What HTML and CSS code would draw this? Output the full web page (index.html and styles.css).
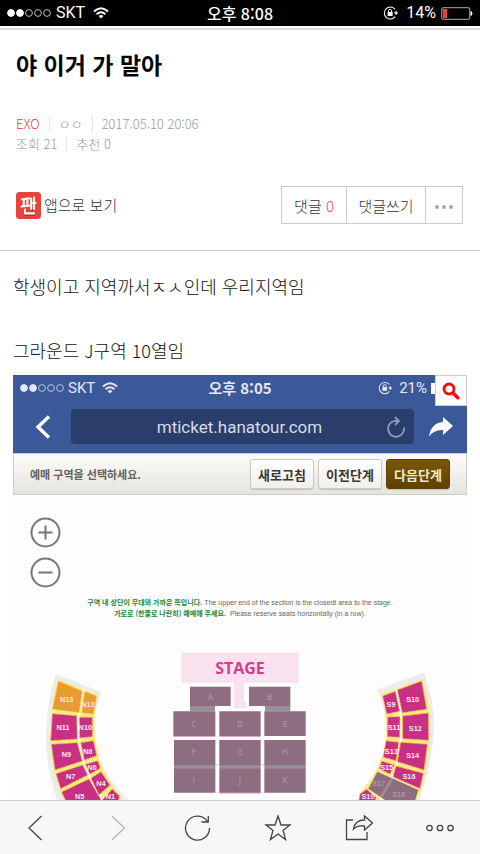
FILE: index.html
```html
<!DOCTYPE html>
<html lang="ko">
<head>
<meta charset="utf-8">
<meta name="viewport" content="width=device-width, initial-scale=1">
<title>야 이거 가 말아</title>
<link rel="stylesheet" href="styles.css">
</head>
<body>
<svg width="0" height="0" class="defs" aria-hidden="true">
  <symbol id="signal" viewBox="0 0 44 10">
    <g stroke="currentColor" stroke-width="1">
      <circle cx="4" cy="5" r="3.4" fill="currentColor"/><circle cx="13" cy="5" r="3.4" fill="currentColor"/>
      <g fill="none" opacity=".75"><circle cx="22" cy="5" r="3.4"/><circle cx="31" cy="5" r="3.4"/><circle cx="40" cy="5" r="3.4"/></g>
    </g>
  </symbol>
  <symbol id="wifi" viewBox="0 0 16 12">
    <g fill="none" stroke="currentColor" stroke-width="2"><path d="M1 4.4Q8-2 15 4.4"/><path d="M3.6 7.2Q8 3.2 12.4 7.2"/></g>
    <path d="M5.6 9Q8 7 10.4 9L8 11.6z" fill="currentColor"/>
  </symbol>
  <symbol id="lock" viewBox="0 0 16 14">
    <path d="M12 3.2A6 6 0 1 0 12.2 10.6M13 4.8V7.6" fill="none" stroke="currentColor" stroke-width="1.1"/>
    <path d="M10.8 6.4H15.4L13.1 9z" fill="currentColor"/>
    <rect x="4.6" y="6" width="5" height="4" fill="currentColor"/>
    <path d="M5.6 6V4.8a1.5 1.5 0 0 1 3 0V6" fill="none" stroke="currentColor"/>
  </symbol>
</svg>

<header class="status">
  <div class="status-side"><svg class="signal"><use href="#signal"/></svg><span>SKT</span><svg class="wifi"><use href="#wifi"/></svg></div>
  <span class="clock">오후 8:08</span>
  <div class="status-side status-end">
    <svg class="lock"><use href="#lock"/></svg><span>14%</span>
    <svg class="battery" viewBox="0 0 32 13"><rect x=".7" y=".7" width="28" height="11.6" rx="2" fill="none" stroke="#8b8b8b" stroke-width="1.3"/><rect x="2" y="2" width="4" height="9" fill="#ff3b30"/><path d="M30 4.5Q32 6.5 30 8.5z" fill="#fff" stroke="#fff"/></svg>
  </div>
</header>

<main class="page">
  <section class="head">
    <h1>야 이거 가 말아</h1>
    <ul class="meta">
      <li class="topic">EXO</li><li>ㅇㅇ</li><li>2017.05.10 20:06</li>
    </ul>
    <ul class="meta">
      <li>조회 21</li><li>추천 0</li>
    </ul>
    <div class="tools">
      <a class="app" href="#">
        <svg class="app-icon" viewBox="0 0 25 27" aria-hidden="true">
          <rect width="25" height="27" rx="3.5" fill="#e8433a"/>
          <g fill="none" stroke="#b62b25" stroke-width="2.4" transform="translate(1 1)"><path d="M15.6 5V18M8.5 17V21.5H18"/></g>
          <g fill="none" stroke="#fff" stroke-width="2.1" stroke-linecap="round" stroke-linejoin="round"><path d="M6 7.2L13 6.4M7.8 8V13.5M11.4 8V13M5.6 14.5L13 13.6M15.2 6.5V17M18 5.5V17M15.5 11H19.5M9 17.5V21.4H18"/></g>
        </svg>
        <span>앱으로 보기</span>
      </a>
      <div class="group">
        <button type="button" class="b-count">댓글 <em>0</em></button>
        <button type="button" class="b-write">댓글쓰기</button>
        <button type="button" class="b-more" aria-label="더보기"><svg viewBox="0 0 20 6"><g fill="#aaa"><circle cx="3" cy="3" r="2"/><circle cx="10" cy="3" r="2"/><circle cx="17" cy="3" r="2"/></g></svg></button>
      </div>
    </div>
  </section>

  <article class="body">
    <p>학생이고 지역까서ㅈㅅ인데 우리지역임</p>
    <p>그라운드 J구역 10열임</p>

    <section class="shot">
      <button type="button" class="enlarge" aria-label="확대"><svg viewBox="0 0 18 18"><circle cx="7" cy="7" r="5" fill="none" stroke="#f20d0d" stroke-width="2.8"/><path d="M11 11L15.8 15.8" stroke="#f20d0d" stroke-width="3.4" stroke-linecap="round"/></svg></button>
      <div class="blue">
        <div class="status inner">
          <div class="status-side"><svg class="signal"><use href="#signal"/></svg><span>SKT</span><svg class="wifi"><use href="#wifi"/></svg></div>
          <span class="clock">오후 8:05</span>
          <div class="status-side status-end"><svg class="lock"><use href="#lock"/></svg><span>21%</span><i class="charge"></i></div>
        </div>
        <div class="address">
          <button type="button" class="back" aria-label="뒤로"><svg viewBox="0 0 16 24"><path d="M14 1.5L3 12L14 22.5" fill="none" stroke="#fff" stroke-width="3.4"/></svg></button>
          <div class="url"><span>mticket.hanatour.com</span><svg viewBox="0 0 20 22" aria-hidden="true"><path d="M18 11.5A8 8 0 1 1 8 5H13M9 1L13 5L9 9" fill="none" stroke="#8d9cc4" stroke-width="1.8"/></svg></div>
          <button type="button" class="share" aria-label="공유"><svg viewBox="0 0 24 20"><path d="M14 0L24 9L14 18V13Q5 12.5 0 19.5Q2 6 14 5z" fill="#fff"/></svg></button>
        </div>
      </div>
      <div class="steps">
        <strong>예매 구역을 선택하세요.</strong>
        <button type="button">새로고침</button>
        <button type="button">이전단계</button>
        <button type="button" class="next">다음단계</button>
      </div>
      <div class="map">
        <div class="zoom">
          <button type="button" aria-label="확대"><svg viewBox="0 0 31 31"><g fill="none" stroke="#777" stroke-width="2"><circle cx="15.5" cy="15.5" r="14"/><path d="M8.5 15.5H22.5M15.5 8.5V22.5"/></g></svg></button>
          <button type="button" aria-label="축소"><svg viewBox="0 0 31 31"><g fill="none" stroke="#777" stroke-width="2"><circle cx="15.5" cy="15.5" r="14"/><path d="M8.5 15.5H22.5"/></g></svg></button>
        </div>
        <p class="notice"><b>구역 내 상단이 무대와 가까운 쪽입니다.</b> The upper end of the section is the closedt area to the stage.</p>
        <p class="notice"><b>가로로 (한줄로 나란히) 예매해 주세요.</b>&nbsp; Please reserve seats horizontally (in a row).</p>
        <svg class="seats" viewBox="-51 150 1362 540" role="img" aria-label="좌석 배치도">
          <g fill="#fae1ef"><path d="M454 188H806V278H642V335H650V355H612V278H454z"/></g>
          <text x="630" y="251" class="stage">STAGE</text>
          <g fill="#999093"><path d="M480 348H555V364H480zM705 348H781V364H705zM432 524H827V540H432z"/></g>
          <g fill="#8e6d80">
            <path d="M480 290H602V348H480zM657 290H781V348H657z"/>
            <path d="M430 364H556V438H430zM568 364H692V438H568zM703 364H827V438H703z"/>
            <path d="M432 450H556V526H432zM568 450H692V526H568zM703 450H827V526H703z"/>
            <path d="M432 536H556V608H432zM568 536H692V608H568zM703 536H827V608H703z"/>
          </g>
          <path d="M430 439H556M568 439H692M568 609H692" stroke="#cf5b91" stroke-width="2"/>
          <path d="M556 526H568V540H556zM692 526H703V540H692z" fill="#fff"/>
          <g class="floor">
            <text x="541" y="329">A</text><text x="719" y="329">B</text>
            <text x="491" y="410">C</text><text x="630" y="410">D</text><text x="765" y="410">E</text>
            <text x="491" y="495">F</text><text x="630" y="495">G</text><text x="765" y="495">H</text>
            <text x="491" y="580">I</text><text x="630" y="580">J</text><text x="765" y="580">K</text>
          </g>
          <text x="632" y="648" class="ground">GROUND</text>

          <path d="M77 252L213 305Q180 400 200 480Q225 575 320 650L350 690H105Q50 570 48 440Q50 340 77 252z" fill="#ececec"/>
          <path d="M83 268L204 315Q182 400 204 490Q218 560 275 620L240 690H130Q60 560 61 440Q64 340 83 268z" fill="#fbe983"/>
          <path d="M160 300Q130 410 160 510Q180 580 226 640" fill="none" stroke="#fff7f4" stroke-width="6"/>
          <g class="seat">
            <path class="gold" d="M85 273L157 303L148 368L67 358z"/><path class="gold" d="M164 304L201 318L190 373L155 368z"/>
            <path d="M67 371L140 377L142 447L62 452z"/><path d="M148 382H187V440L149 444z"/>
            <path d="M64 463L142 458L157 513L75 540z"/><path d="M152 458L190 452L200 497L163 510z"/>
            <path d="M78 551L158 525L173 555L92 596z"/><path d="M166 523L203 512L211 535L180 552z"/>
            <path d="M95 606L177 567L212 628V690H135z"/><path d="M183 565L213 545L240 585L207 615z"/>
            <path d="M217 630L247 597L268 618L260 680z"/>
          </g>
          <g class="label">
            <text x="110" y="337">N13</text><text x="174" y="350">N12</text><text x="99" y="421">N11</text><text x="166" y="421">N10</text>
            <text x="109" y="501">N9</text><text x="173" y="492">N8</text><text x="122" y="566">N7</text><text x="186" y="539">N6</text>
            <text x="149" y="626">N5</text><text x="213" y="587">N4</text><text x="241" y="628">N1</text>
          </g>

          <g transform="translate(630 0)">
            <path d="M412 298L552 248Q590 350 580 440Q570 570 510 690H290L345 635Q430 560 442 440Q440 370 412 298z" fill="#ececec"/>
            <path d="M424 313L548 267Q577 360 569 440Q565 560 510 690H340L360 608Q430 530 439 440Q440 370 424 313z" fill="#fbe983"/>
            <path d="M468 300Q494 400 478 480Q470 560 420 630" fill="none" stroke="#fff7f4" stroke-width="6"/>
            <g class="seat">
              <path d="M428 318L466 304L479 364L440 372z"/><path d="M472 300L545 273L560 358L487 368z"/>
              <path d="M443 381L480 380L479 442L442 440z"/><path d="M488 378L565 369L566 451L488 446z"/>
              <path d="M438 452L476 457L468 512L430 502z"/><path d="M482 457L562 463L552 540L472 515z"/>
              <path d="M425 513L463 525L450 552L418 537z"/><path d="M468 528L550 550L540 596L459 560z"/>
              <path d="M360 612L380 598L408 622L400 680H350z"/>
            </g>
            <path d="M412 545L535 600L510 680L385 596z" fill="#8e6d80"/>
            <path d="M455 568L424 620" stroke="#9d9097" stroke-width="8"/>
            <g class="label">
              <text x="453" y="350">S9</text><text x="518" y="335">S10</text><text x="462" y="421">S11</text><text x="526" y="422">S12</text>
              <text x="454" y="491">S13</text><text x="518" y="503">S14</text><text x="440" y="540">S15</text><text x="507" y="566">S16</text>
              <text x="384" y="627">S19</text>
              <text class="off" x="416" y="587">S17</text><text class="off" x="476" y="622">S18</text>
            </g>
          </g>
        </svg>
      </div>
    </section>
  </article>
</main>

<nav class="bar">
  <button type="button" aria-label="뒤로"><svg viewBox="0 0 28 28"><path d="M20.5 2L8 14L20.5 26"/></svg></button>
  <button type="button" aria-label="앞으로" class="dim"><svg viewBox="0 0 28 28"><path d="M10 2L22.5 14L10 26"/></svg></button>
  <button type="button" aria-label="새로고침"><svg viewBox="0 0 28 28"><path d="M26.5 14A12 12 0 1 1 24 6.8L25 8M25.3 2V8H18.500"/></svg></button>
  <button type="button" aria-label="즐겨찾기"><svg viewBox="0 0 28 28"><path d="M14 2L17 11H26L19 16.500L21.600 25.500L14 20L6.400 25.500L9 16.500L2 11H11z"/></svg></button>
  <button type="button" aria-label="공유"><svg viewBox="0 0 28 28"><path d="M8 6H1.500V25.500H22V18M8.500 15Q10 6 19.500 6V2L27.500 9L19.500 16V12Q12 11 8.500 15z"/></svg></button>
  <button type="button" aria-label="메뉴"><svg viewBox="0 0 28 28"><circle cx="3.500" cy="14" r="2.700"/><circle cx="14" cy="14" r="2.700"/><circle cx="24.500" cy="14" r="2.700"/></svg></button>
</nav>
</body>
</html>
```
FILE: styles.css
```css
* { box-sizing: border-box; }
body {
  margin: 0;
  height: 100vh;
  display: flex;
  flex-direction: column;
  background: #fff;
  color: #222;
  font-family: "Noto Sans CJK KR", sans-serif;
  font-weight: 300;
}
.defs { position: absolute; }
svg { display: block; flex: none; }
button {
  font: inherit;
  color: inherit;
  margin: 0;
  padding: 0;
  border: 0;
  background: none;
}
p, h1, ul { margin: 0; padding: 0; }

.status {
  flex: none;
  height: 26px;
  display: grid;
  grid-template-columns: 1fr auto 1fr;
  align-items: center;
  padding: 0 7px;
  background: #000;
  color: #fff;
  font-size: 16px;
  line-height: 24px;
  font-weight: 400;
}
.status-side { display: flex; align-items: center; gap: 5px; font-family: Roboto, sans-serif; font-size: 16px; }
.status-end { justify-content: flex-end; }
.clock { font-weight: 500; }
.signal { width: 44px; height: 10px; }
.wifi { width: 16px; height: 12px; margin-left: 3px; }
.lock { width: 16px; height: 14px; margin-right: 2px; }
.battery { width: 32px; height: 13px; }

.page { flex: 1; min-height: 0; overflow: hidden; margin-top: 2px; border-top: 2px solid #ddd; }
.head { padding: 18px 17px 26px 16px; border-bottom: 1px solid #ccc; }
h1 { font-size: 23px; line-height: 32px; font-weight: 700; color: #000; margin-bottom: 34px; }
.meta { display: flex; list-style: none; font-size: 13px; line-height: 20px; color: #999; }
.meta li { display: flex; align-items: center; }
.meta li + li::before { content: ""; width: 1px; height: 14px; margin: 0 9px; background: #e4e4e4; }
.meta .topic { color: #f5333a; }
.tools { display: flex; align-items: center; justify-content: space-between; margin-top: 32px; }
.app { display: flex; align-items: center; gap: 3px; color: #333; text-decoration: none; font-size: 15px; line-height: 24px; }
.app-icon { width: 25px; height: 27px; }
.group { display: flex; border: 1px solid #ccc; font-size: 15px; color: #333; }
.group button { height: 36px; }
.group button + button { border-left: 1px solid #ccc; }
.group em { font-style: normal; color: #f5494d; }
.b-count { width: 64px; }
.b-write { width: 79px; }
.b-more { width: 37px; display: flex; align-items: center; justify-content: center; }
.b-more svg { width: 20px; height: 6px; margin-top: 4px; }

.body { padding: 19px 13px 0; }
.body > p { font-size: 18px; line-height: 32px; margin-bottom: 32px; color: #111; }
.body > p + p { margin-bottom: 9px; }

.shot { position: relative; }
.enlarge {
  position: absolute;
  top: 0;
  right: 0;
  width: 32px;
  height: 31px;
  display: flex;
  align-items: center;
  justify-content: center;
  background: #fff;
  border: 1px solid #ccc;
}
.enlarge svg { width: 18px; height: 18px; }
.blue { background: #3b5998; height: 78px; }
.inner { background: none; color: #e3e8f3; font-size: 15px; }
.inner .status-side { font-size: 15px; gap: 4px; }
.inner .status-end { padding-right: 25px; }
.inner .lock { width: 15px; }
.inner .clock { font-weight: 700; }
.charge { width: 4px; height: 11px; background: #fff; }
.address { display: flex; align-items: center; gap: 15px; padding: 8px 14px 0 22px; }
.back svg { width: 16px; height: 24px; }
.back { width: 21px; }
.share svg { width: 24px; height: 20px; }
.url {
  flex: 1;
  height: 35px;
  display: flex;
  align-items: center;
  padding: 0 8px 0 22px;
  border-radius: 4px;
  background: #293e6b;
  color: #d6dcea;
  font: 400 17px/24px Roboto, sans-serif;
}
.url span { flex: 1; text-align: center; }
.url svg { width: 20px; height: 22px; }
.steps {
  display: flex;
  align-items: center;
  gap: 4px;
  height: 42px;
  padding: 0 16px;
  border: 1px solid #cfcec4;
  background: linear-gradient(#fcfcfa, #e5e4de);
}
.steps strong { flex: 1; font-size: 11px; font-weight: 700; color: #66605c; }
.steps button {
  width: 64px;
  height: 30px;
  border: 1px solid #cbc9c4;
  border-radius: 3px;
  background: linear-gradient(#fff, #f0efec);
  box-shadow: 0 1px 1px #c4c2bc;
  font-size: 13px;
  font-weight: 700;
  color: #3b3734;
}
.steps .next { border-color: #614304; background: linear-gradient(#7b5706, #5f4000); color: #f3ead4; }
.map { background: #fdfdfd; padding-top: 22px; }
.zoom { display: flex; flex-direction: column; gap: 9px; padding-left: 17px; margin-bottom: 9px; }
.zoom button { width: 31px; height: 31px; }
.notice { font: 400 7px/11px "Liberation Sans", sans-serif; text-align: center; color: #666; white-space: nowrap; }
.notice b { font: 700 7px/11px "Noto Sans CJK KR", sans-serif; color: #1b8434; }
.seats { width: 100%; margin-top: 21px; font-family: "Open Sans", sans-serif; text-anchor: middle; }
.stage { font-size: 48px; font-weight: 700; fill: #d43d8c; }
.floor { font-size: 24px; font-weight: 600; fill: #a593a0; }
.ground { font-size: 28px; font-weight: 700; fill: #444; }
.seat path { fill: #c92f83; stroke: #f4b942; stroke-width: 3; stroke-dasharray: 5 3; }
.seat .gold { fill: #e89a35; stroke: #f8df4a; }
.label { font: 700 22px "Liberation Sans", sans-serif; fill: #fbe9f3; }
.label .off { fill: #aa96a3; }

.bar {
  flex: none;
  height: 54px;
  display: flex;
  align-items: center;
  justify-content: space-between;
  padding: 0 26px 0 21px;
  background: #f7f7f7;
  border-top: 1px solid #ccc;
}
.bar svg { width: 28px; height: 28px; fill: none; stroke: #444; stroke-width: 1.3; }
.bar .dim svg { stroke: #b5b5b5; }
```
